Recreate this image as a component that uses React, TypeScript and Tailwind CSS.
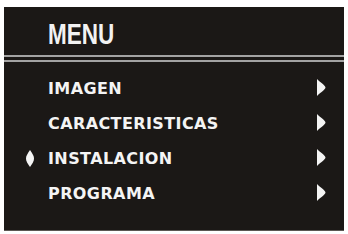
import * as React from "react";

const items = [
  { label: "IMAGEN", selected: false },
  { label: "CARACTERISTICAS", selected: false },
  { label: "INSTALACION", selected: true },
  { label: "PROGRAMA", selected: false },
];

function Arrow() {
  return (
    <svg width="10" height="17" viewBox="0 0 10 17" className="block">
      <path d="M1 0 C5 4 9 6 9.5 8.5 C9 11 5 13 1 17 Z" fill="#f4f4f4" />
    </svg>
  );
}

function Selector() {
  return (
    <svg width="8" height="17" viewBox="0 0 8 17" className="block">
      <path d="M4 0 C6.5 3.5 8 6 8 8.5 C8 11 6.5 13.5 4 17 C1.5 13.5 0 11 0 8.5 C0 6 1.5 3.5 4 0 Z" fill="#f4f4f4" />
    </svg>
  );
}

export default function App() {
  return (
    <div className="h-[234px] w-[348px] bg-white pl-[4px] pt-[7px]">
      <div className="flex h-[224px] w-[340px] flex-col border-b border-[#5a5753] bg-[#1b1816]">
        <div className="flex h-[48px] items-start pl-[44px] pt-[12px]">
          <span
            className="origin-left scale-x-[0.75] text-[30px] font-bold leading-none text-[#f2f2f2]"
            style={{ fontFamily: '"Liberation Sans", Arial, sans-serif' }}
          >
            MENU
          </span>
        </div>
        <div className="h-[2px] bg-[#a3a3a3]" />
        <div className="h-[3px]" />
        <div className="h-[2px] bg-[#a3a3a3]" />
        <ul className="pt-[9px]">
          {items.map((it) => (
            <li key={it.label} className="flex h-[35px] items-center">
              <div className="flex w-[44px] justify-start pl-[22px]">
                {it.selected ? <Selector /> : null}
              </div>
              <span
                className="text-[16px] font-bold leading-none tracking-[0.4px] text-[#f4f4f4]"
                style={{ fontFamily: '"DejaVu Sans", sans-serif' }}
              >
                {it.label}
              </span>
              <div className="ml-auto mr-[18px] -mt-[3px]">
                <Arrow />
              </div>
            </li>
          ))}
        </ul>
      </div>
    </div>
  );
}
